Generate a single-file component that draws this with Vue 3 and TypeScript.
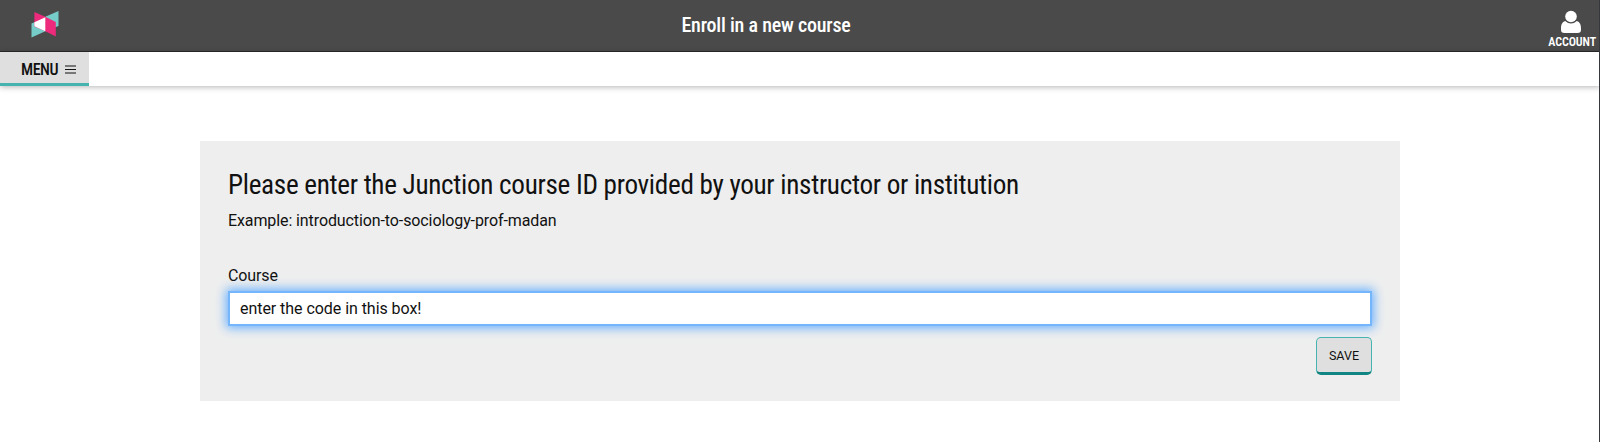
<script setup lang="ts">
import { ref } from 'vue'

const courseId = ref<string>('enter the code in this box!')
</script>

<template>
  <div class="page">
    <header class="topbar">
      <svg class="logo" viewBox="0 0 28 28" width="28" height="28">
        <path d="M14.300 6.800 27.500 1V16L14.300 21z" fill="#75ccc8" />
        <path d="M.5 13.600 14.300 7.500V21.300L.5 27.500z" fill="#75ccc8" />
        <path d="M3.400 2 14.300 6.800 24.800 12V26.500L14.300 21.300 3.400 16.500z" fill="#ed2a7b" />
        <path d="M3.400 12.300 14.300 7.200V21.300L3.400 16.300z" fill="#fff" />
      </svg>
      <h1 class="title"><span class="cond">Enroll in a new course</span></h1>
      <div class="account">
        <svg viewBox="0 0 22 24" width="22" height="24">
          <path d="M5.2 11C2 12 1 15 1 18.5V20q0 3 3.4 3h13.2Q21 23 21 20v-1.500C21 15 20 12 16.800 11Q14 13.500 11 13.500T5.200 11z" fill="#fff" />
          <circle cx="11" cy="6.500" r="5.800" fill="#fff" />
        </svg>
        <span class="cond">ACCOUNT</span>
      </div>
    </header>
    <nav class="navbar">
      <button class="menu">
        <span class="cond">MENU</span>
        <svg viewBox="0 0 11 9" width="11" height="9">
          <path d="M0 1h11M0 4.500h11M0 8h11" stroke="#111" stroke-width="1.200" />
        </svg>
      </button>
    </nav>
    <main class="panel">
      <h2 class="heading"><span class="cond">Please enter the Junction course ID provided by your instructor or institution</span></h2>
      <p class="example">Example: introduction-to-sociology-prof-madan</p>
      <label class="label" for="course">Course</label>
      <input id="course" v-model="courseId" class="field" type="text" />
      <button class="save">SAVE</button>
    </main>
    <div class="edge"></div>
  </div>
</template>

<style>
body { margin: 0; background: #fff; }
</style>

<style scoped>
.page {
  position: relative;
  height: 442px;
  overflow: hidden;
  font-family: Roboto, "Liberation Sans", sans-serif;
  color: #111;
}
.cond { display: inline-block; font-stretch: 75%; white-space: nowrap; }
.topbar {
  box-sizing: border-box;
  height: 52px;
  display: grid;
  grid-template-columns: 100px 1fr 100px;
  background: #4a4a4a;
  border-bottom: 1px solid #292929;
  color: #fff;
}
.logo { margin: 10px 0 0 30.500px; }
.title {
  margin: 0;
  padding-right: 68px;
  font-size: 20px;
  line-height: 51px;
  font-weight: 550;
  letter-spacing: -.22px;
  text-align: center;
}
.account {
  display: flex;
  flex-direction: column;
  align-items: center;
  width: 48px;
  margin-left: 48.200px;
  padding-top: 10px;
  font-size: 12px;
  line-height: 17px;
  font-weight: 600;
  letter-spacing: -.1px;
}
.account svg { margin-right: 2px; flex: none; }
.navbar {
  height: 34px;
  background: #fff;
  box-shadow: 0 1px 6px rgba(0, 0, 0, .3);
}
.menu {
  box-sizing: border-box;
  display: flex;
  align-items: center;
  gap: 7px;
  width: 89px;
  height: 34px;
  padding: 3px 0 0 21px;
  border: 0;
  border-bottom: 3px solid #45b3af;
  background: #dfdfdf;
  color: #111;
  font: 500 16px Roboto, sans-serif;
  letter-spacing: -.45px;
}
.panel {
  box-sizing: border-box;
  display: flex;
  flex-direction: column;
  width: 1199.400px;
  height: 260px;
  margin: 55px 0 0 200.400px;
  padding: 25px 27.800px 0 27.600px;
  background: #eee;
}
.heading { margin: 0; font-size: 27.200px; line-height: 38px; font-weight: 400; letter-spacing: -.31px; }
.example { margin: 7px 0 0; font-size: 16px; line-height: 20px; letter-spacing: -.1px; }
.label { margin-top: 35px; font-size: 16px; line-height: 20px; letter-spacing: -.1px; }
.field {
  box-sizing: border-box;
  height: 35px;
  margin-top: 5px;
  padding: 0 10px;
  border: 2px solid #74b5fc;
  outline: 0;
  background: #fff;
  color: #111;
  font: 16px Roboto, sans-serif;
  letter-spacing: -.05px;
  box-shadow: 0 0 10px 2px #66b0ff;
}
.save {
  box-sizing: border-box;
  align-self: flex-end;
  width: 56px;
  height: 38px;
  margin-top: 11px;
  padding: 0;
  border: 1px solid #45b3af;
  border-bottom: 3px solid #118581;
  border-radius: 5px;
  background: #dfdfdf;
  color: #111;
  font: 12.500px Roboto, sans-serif;
}
.edge {
  position: absolute;
  top: 0;
  right: 0;
  width: 1px;
  height: 442px;
  background: #36373b;
}
</style>
